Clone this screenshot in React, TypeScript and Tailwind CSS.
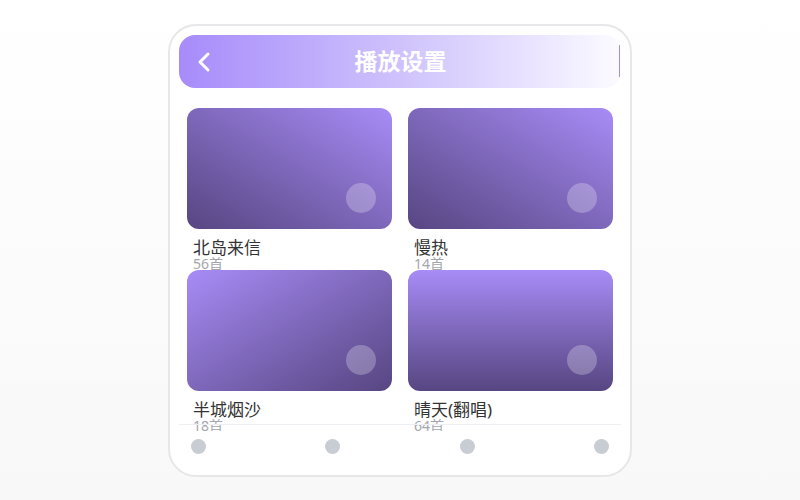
const songs = [
  { name: "北岛来信", count: 56, bg: "bg-linear-to-tr from-[#574682] to-[#a88cf7]" },
  { name: "慢热", count: 14, bg: "bg-linear-to-tr from-[#574682] to-[#a88cf7]" },
  { name: "半城烟沙", count: 18, bg: "bg-linear-to-br from-[#a88cf7] to-[#574682]" },
  { name: "晴天(翻唱)", count: 64, bg: "bg-linear-to-b from-[#a88cf7] to-[#574682]" },
];

export default function App() {
  return (
    <div
      className="h-[500px] w-full bg-linear-to-b from-white to-[#f8f8f9] pt-[24px]"
      style={{ fontFamily: '"Noto Sans", "Noto Sans CJK SC", sans-serif' }}
    >
      <div className="mx-auto h-[453px] w-[464px] rounded-[28px] border-2 border-[#e7e7ea] bg-white p-[9px]">
        {/* 顶部栏 */}
        <div className="relative flex h-[53px] items-center rounded-[16px] bg-linear-to-r from-[#a78bfa] via-[#cfc2fc] to-[#fcfbff] px-[16px]">
          <svg width="16" height="22" viewBox="0 0 16 22" fill="none" className="ml-[1px]">
            <path d="M12 3 L4 11 L12 19" stroke="white" strokeWidth="3" strokeLinecap="round" strokeLinejoin="round" />
          </svg>
          <div className="flex-1 pr-[16px] text-center text-[23px] font-bold text-white">
            播放设置
          </div>
          <div className="absolute right-[1px] top-[10px] h-[32px] w-[1.5px] bg-[#a78bfa]" />
        </div>

        {/* 歌单 */}
        <div className="mt-[20px] h-[323px] overflow-hidden px-[8px]">
          <div className="grid grid-cols-2 gap-x-[16px]">
            {songs.map((s) => (
              <div key={s.name} className="h-[162px]">
                <div className={`relative h-[121px] rounded-[12px] ${s.bg}`}>
                  <div className="absolute bottom-[16px] right-[16px] h-[30px] w-[30px] rounded-full bg-white/25" />
                </div>
                <div className="mt-[10px] pl-[6px] text-[17px] leading-[18px] text-[#333]">{s.name}</div>
                <div className="pl-[6px] text-[14px] leading-[14px] text-[#a3a6ad]">{s.count}首</div>
              </div>
            ))}
          </div>
        </div>

        {/* 底部导航 */}
        <div className="relative -mt-[7px] flex justify-between border-t border-[#eeeff2] px-[12px] pt-[14px]">
          {[0, 1, 2, 3].map((i) => (
            <div key={i} className="h-[15px] w-[15px] rounded-full bg-[#c8ccd3]" />
          ))}
        </div>
      </div>
    </div>
  );
}
